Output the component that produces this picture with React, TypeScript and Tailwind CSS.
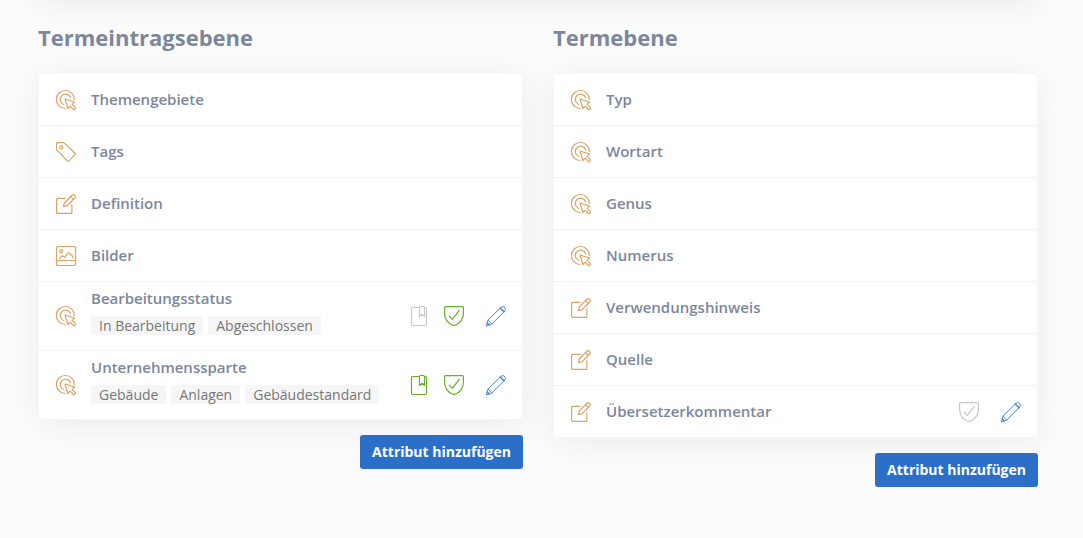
import React from "react";

type IconProps = { className?: string };

type Attribute = {
  name: string;
  icon: React.FC<IconProps>;
  values?: string[];
  bookmark?: boolean; // undefined hides the action
  approved?: boolean;
};

const Svg = ({
  className = "",
  children,
}: IconProps & { children: React.ReactNode }) => (
  <svg
    viewBox="0 0 20 20"
    fill="none"
    stroke="currentColor"
    strokeWidth="1.2"
    strokeLinecap="round"
    strokeLinejoin="round"
    aria-hidden="true"
    className={`size-5 shrink-0 overflow-visible ${className}`}
  >
    {children}
  </svg>
);

const TargetIcon = ({ className }: IconProps) => (
  <Svg className={className}>
    <path d="M18.4 9.4A9 9 0 1 0 9 18.5" />
    <path d="M14.6 7.8A5.3 5.3 0 1 0 7.8 14.5" />
    <path d="M9 9l9.6 3-2.6 2.4 3.4 3.200q.5.5 0 1l-.9.9q-.5.5-1 0L14.200 16.200 11.900 18.500z" />
  </Svg>
);

const TagIcon = ({ className }: IconProps) => (
  <Svg className={className}>
    <path d="M.6 1.8Q.6.6 1.8.6h6L19 11.2q.7.7 0 1.4l-6 6.2q-.7.7-1.4 0L.6 7.9z" />
    <circle cx="5.3" cy="5.3" r="1.5" />
  </Svg>
);

const ComposeIcon = ({ className }: IconProps) => (
  <Svg className={className}>
    <path d="M9 4.4H1.6q-1 0-1 1v13q0 1 1 1h13.3q1 0 1-1v-7.6" />
    <path d="M7.4 12.6l1-3.8 7.6-7.5q1.3-1.2 2.7.1 1.3 1.3.1 2.6l-7.6 7.6z" />
    <path d="M14.8 2.6l2.7 2.7" />
  </Svg>
);

const ImageIcon = ({ className }: IconProps) => (
  <Svg className={className}>
    <rect x=".5" y=".5" width="19" height="19" rx="1" />
    <path d="M.5 14.5h19" />
    <circle cx="5.2" cy="5.2" r="1.5" />
    <path d="M3.6 12.6q1.8-3 3.4-2.6l1.8 1.3 3.2-4.4q.7-.8 1.4 0l1 2q1.4-.6 1.8.6l.8 2.2" />
  </Svg>
);

const BookmarkIcon = ({ className }: IconProps) => (
  <Svg className={className}>
    <path d="M10 1.5H3.6q-1.1 0-1.1 1.2v15.6q0 1.200 1.100 1.200h12.800q1.100 0 1.100-1.200V2.700q0-1.200-1.100-1.200h-1" />
    <path d="M10.500 1.400q0-.9.900-.9h3.200q.9 0 .9.9v9.100l-2.500-2.300-2.500 2.300z" />
  </Svg>
);

const ShieldIcon = ({ className }: IconProps) => (
  <Svg className={className}>
    <path d="M.6 1.700Q.6.600 1.700.600h16.600q1.100 0 1.100 1.100v5.800q0 8.200-8.300 11.700-1.100.5-2.200 0Q.6 15.700.6 7.500z" />
    <path d="M5.300 10.200l3 3.200 7-9" />
  </Svg>
);

const PencilIcon = ({ className }: IconProps) => (
  <Svg className={className}>
    <g strokeWidth="1">
      <path d="M.5 19.500l1.500-5.300L14.900 1.300q1.900-1.600 3.700.1 1.700 1.800.1 3.700L5.800 18z" />
      <path d="M2 14.200L5.800 18" />
    </g>
    <path d="M14.200 2l3.800 3.800M1.300 17l1.700 1.700" strokeWidth="1.500" />
  </Svg>
);

const entryAttributes: Attribute[] = [
  { name: "Themengebiete", icon: TargetIcon },
  { name: "Tags", icon: TagIcon },
  { name: "Definition", icon: ComposeIcon },
  { name: "Bilder", icon: ImageIcon },
  {
    name: "Bearbeitungsstatus",
    icon: TargetIcon,
    values: ["In Bearbeitung", "Abgeschlossen"],
    bookmark: false,
    approved: true,
  },
  {
    name: "Unternehmenssparte",
    icon: TargetIcon,
    values: ["Gebäude", "Anlagen", "Gebäudestandard"],
    bookmark: true,
    approved: true,
  },
];

const termAttributes: Attribute[] = [
  { name: "Typ", icon: TargetIcon },
  { name: "Wortart", icon: TargetIcon },
  { name: "Genus", icon: TargetIcon },
  { name: "Numerus", icon: TargetIcon },
  { name: "Verwendungshinweis", icon: ComposeIcon },
  { name: "Quelle", icon: ComposeIcon },
  { name: "Übersetzerkommentar", icon: ComposeIcon, approved: false },
];

const stateColor = (active: boolean) =>
  active ? "text-[#69ad28]" : "text-[#c3caca]";

const AttributeRow = ({ attribute }: { attribute: Attribute }) => {
  const { name, icon: Icon, values, bookmark, approved } = attribute;

  return (
    <li className="flex items-center border-b border-[#f2f2f2] pr-4 pl-[17px] last:border-b-0">
      <Icon className="text-[#dba365]" />
      <div
        className={`ml-[15px] min-w-0 flex-1 ${values ? "pt-[7px] pb-[15px]" : "py-4"}`}
      >
        <p className="text-[15px] leading-[19px] font-semibold text-[#7c879b]">
          {name}
        </p>
        {values && (
          <ul className="mt-2 flex flex-wrap gap-[5px]">
            {values.map((value) => (
              <li
                key={value}
                className="rounded-xs bg-[#f6f6f6] px-2 text-sm leading-[19px] text-[#777777]"
              >
                {value}
              </li>
            ))}
          </ul>
        )}
      </div>
      {approved !== undefined && (
        <div className="flex items-center">
          {bookmark !== undefined && (
            <button
              type="button"
              aria-label="Lesezeichen"
              aria-pressed={bookmark}
              className={`mr-[15px] cursor-pointer ${stateColor(bookmark)}`}
            >
              <BookmarkIcon />
            </button>
          )}
          <button
            type="button"
            aria-label="Freigabe"
            aria-pressed={approved}
            className={`mr-[22px] cursor-pointer ${stateColor(approved)}`}
          >
            <ShieldIcon />
          </button>
          <button
            type="button"
            aria-label="Bearbeiten"
            className="cursor-pointer text-[#4a86d6]"
          >
            <PencilIcon />
          </button>
        </div>
      )}
    </li>
  );
};

const AttributePanel = ({
  title,
  attributes,
}: {
  title: string;
  attributes: Attribute[];
}) => (
  <section className="min-w-0 flex-1">
    <h2 className="text-[22px] leading-8 font-bold text-[#7c879b]">{title}</h2>
    <ul className="mt-5 rounded-[3px] border border-[#f6f6f6] bg-white shadow-[0_5px_35px_rgba(0,0,0,0.07)]">
      {attributes.map((attribute) => (
        <AttributeRow key={attribute.name} attribute={attribute} />
      ))}
    </ul>
    <div className="mt-[15px] flex justify-end">
      <button
        type="button"
        className="cursor-pointer rounded-[3px] bg-[#2c6fc9] px-3 py-[7px] text-sm leading-5 font-bold text-white hover:bg-[#2560b0]"
      >
        Attribut hinzufügen
      </button>
    </div>
  </section>
);

const App: React.FC = () => {
  return (
    <div className="min-h-screen overflow-hidden bg-[#fcfcfc] pr-[45px] pl-[38px] font-['Open_Sans',sans-serif]">
      {/* lower edge of the card above */}
      <div className="-mt-20 h-20 rounded-[3px] bg-white shadow-[0_5px_35px_rgba(0,0,0,0.07)]" />
      <main className="flex gap-[30px] pt-[21px]">
        <AttributePanel
          title="Termeintragsebene"
          attributes={entryAttributes}
        />
        <AttributePanel title="Termebene" attributes={termAttributes} />
      </main>
    </div>
  );
};

export default App;
